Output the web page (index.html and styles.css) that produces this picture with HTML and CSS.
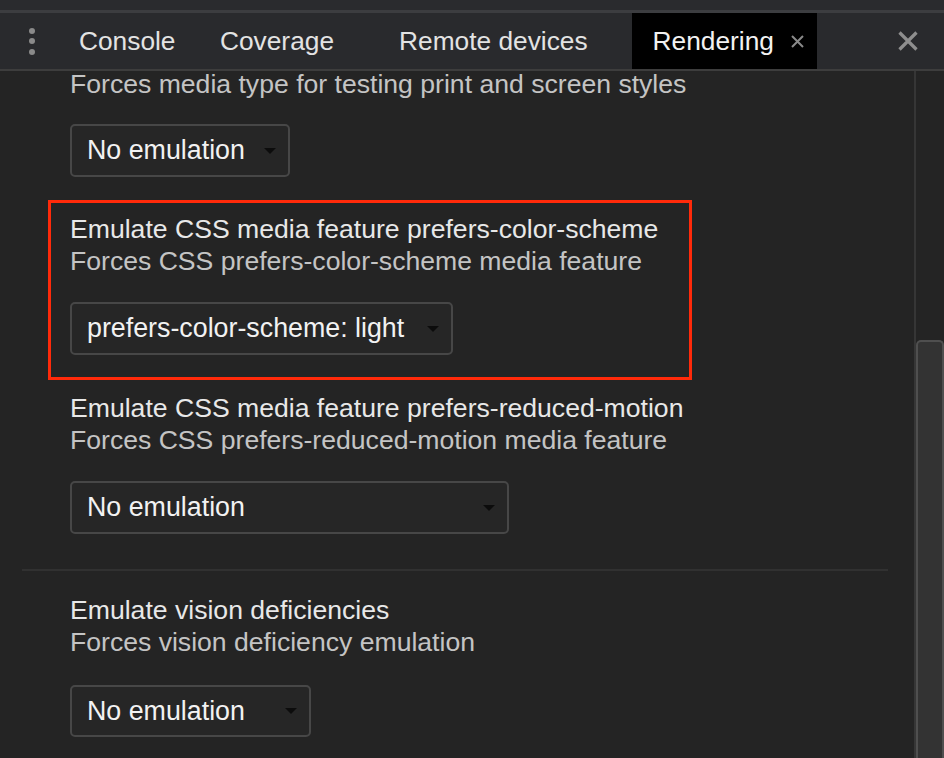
FILE: index.html
```html
<!DOCTYPE html>
<html lang="en">
<head>
<meta charset="utf-8">
<title>Rendering</title>
<link rel="stylesheet" href="styles.css">
</head>
<body>
<div class="topstrip"></div>
<div class="tabbar">
  <div class="more"><span></span><span></span><span></span></div>
  <div class="tab">Console</div>
  <div class="tab closable">Coverage<span class="tclose"></span></div>
  <div class="tab closable">Remote devices<span class="tclose"></span></div>
  <div class="tab closable active">Rendering<span class="tclose"><svg width="13" height="13" viewBox="0 0 13 13"><path d="M1 1 L12 12 M12 1 L1 12" stroke="#8a8a8a" stroke-width="2"/></svg></span></div>
  <div class="spacer"></div>
  <div class="drawer-close">
    <svg width="20" height="20" viewBox="0 0 20 20"><path d="M1.5 1.5 L18.5 18.5 M18.5 1.5 L1.5 18.5" stroke="#8e8e8e" stroke-width="3.2"/></svg>
  </div>
</div>
<div class="main">
  <div class="content">
    <div class="inner">
      <section class="setting first">
        <div class="desc">Forces media type for testing print and screen styles</div>
        <div class="select w1">No emulation<span class="arrow"></span></div>
      </section>
      <section class="setting highlight">
        <div class="title">Emulate CSS media feature prefers-color-scheme</div>
        <div class="desc">Forces CSS prefers-color-scheme media feature</div>
        <div class="select w2">prefers-color-scheme: light<span class="arrow"></span></div>
      </section>
      <section class="setting third">
        <div class="title">Emulate CSS media feature prefers-reduced-motion</div>
        <div class="desc">Forces CSS prefers-reduced-motion media feature</div>
        <div class="select w3">No emulation<span class="arrow"></span></div>
      </section>
      <div class="divider"></div>
      <section class="setting fourth">
        <div class="title">Emulate vision deficiencies</div>
        <div class="desc">Forces vision deficiency emulation</div>
        <div class="select w4">No emulation<span class="arrow"></span></div>
      </section>
    </div>
  </div>
  <div class="scrollbar"><div class="thumb"></div></div>
</div>
</body>
</html>
```
FILE: styles.css
```css
* { box-sizing: border-box; }
html, body {
  margin: 0;
  padding: 0;
  width: 944px;
  height: 758px;
  overflow: hidden;
  background: #242424;
  font-family: "Liberation Sans", Arial, sans-serif;
}
.topstrip {
  height: 13px;
  background: #2a2b2e;
  border-bottom: 3px solid #3c3d40;
}
.tabbar {
  height: 58px;
  background: #292a2d;
  border-bottom: 2px solid #3d3d3d;
  display: flex;
  align-items: stretch;
  gap: 2.5px;
}
.more {
  width: 56px;
  display: flex;
  flex-direction: column;
  align-items: flex-start;
  justify-content: center;
  gap: 4.5px;
  padding-left: 29px;
}
.more span {
  width: 6px;
  height: 6px;
  border-radius: 50%;
  background: #8a8a8a;
}
.tab {
  display: flex;
  align-items: center;
  padding: 0 21px;
  font-size: 26.3px;
  color: #e3e3e3;
  white-space: nowrap;
}
.tab:nth-child(2) { padding-left: 20.5px; }
.tab.closable { padding-right: 11.5px; }
.tab.active { padding-right: 13px; }
.tclose {
  width: 16px;
  height: 13px;
  margin-left: 14px;
  display: flex;
  justify-content: flex-end;
}
.tab.active {
  background: #000;
  color: #f2f2f2;
}
.spacer { flex: 1; }
.drawer-close {
  display: flex;
  align-items: center;
  margin-right: 26px;
}
.main {
  display: flex;
  height: 687px;
}
.content {
  flex: 1;
  overflow: hidden;
}
.inner {
  padding-left: 22px;
  padding-right: 26px;
}
.setting {
  padding-left: 48px;
  display: flex;
  flex-direction: column;
  align-items: flex-start;
}
.title {
  font-size: 26.6px;
  line-height: 32px;
  color: #e8e8e8;
  white-space: nowrap;
}
.desc {
  font-size: 26.6px;
  line-height: 32px;
  color: #c4c4c4;
  white-space: nowrap;
}
.first .desc { line-height: 26px; }
.first .select { margin-top: 27px; }
.select {
  position: relative;
  margin-top: 25px;
  height: 53px;
  border: 2px solid #474747;
  border-radius: 5px;
  background: #262626;
  color: #f2f2f2;
  font-size: 26.8px;
  display: flex;
  align-items: center;
  padding-left: 15px;
  white-space: nowrap;
}
.arrow {
  position: absolute;
  right: 12px;
  top: 50%;
  margin-top: -3px;
  width: 0;
  height: 0;
  border-left: 6px solid transparent;
  border-right: 6px solid transparent;
  border-top: 6px solid #0c0c0c;
}
.w1 { width: 220px; }
.w2 { width: 383px; }
.w3 { width: 439px; }
.w4 { width: 241px; }
.first { padding-bottom: 23px; }
.highlight {
  margin-left: 26px;
  width: 644px;
  padding: 10px 0 22px 19px;
  border: 3px solid #ff2a0a;
  margin-bottom: 12px;
}
.third { padding-bottom: 35px; }
.divider {
  height: 2px;
  background: #313131;
}
.fourth { padding-top: 23px; }
.fourth .select { margin-top: 27px; height: 52px; }
.scrollbar {
  width: 30px;
  border-left: 2px solid #363636;
  background: #242424;
  position: relative;
}
.thumb {
  position: absolute;
  left: 0;
  right: 0;
  top: 269px;
  bottom: 0;
  background: #333333;
  border: 2px solid #4f4f4f;
  border-bottom: none;
  border-radius: 5px 5px 0 0;
}
```
